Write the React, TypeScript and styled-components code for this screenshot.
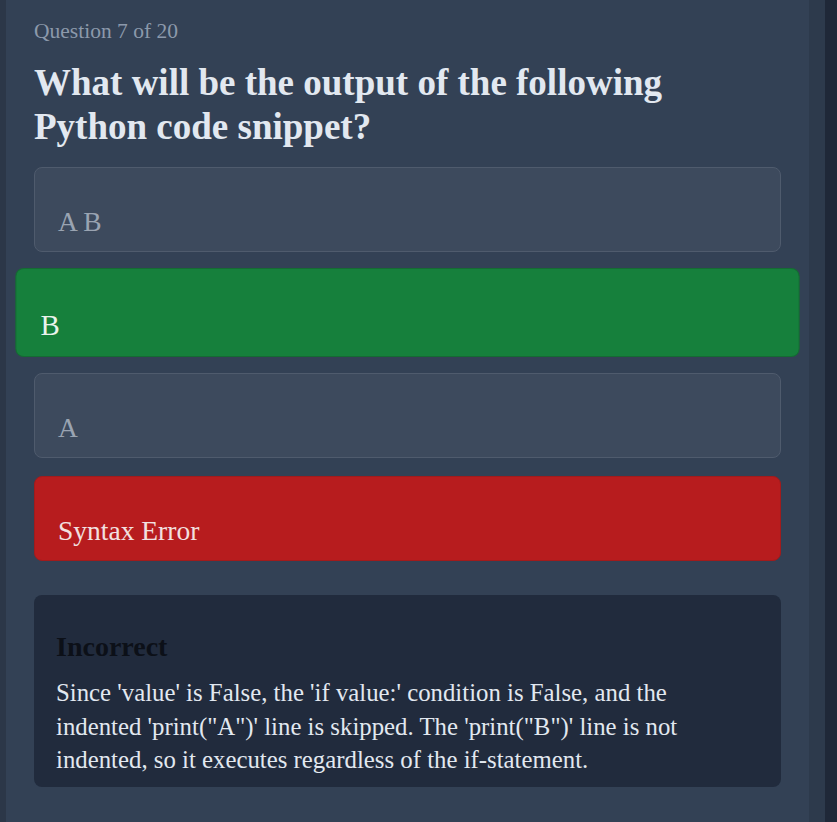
import React from 'react';
import styled, { createGlobalStyle } from 'styled-components';

type OptionState = 'idle' | 'correct' | 'wrong';

const options: { label: string; state: OptionState }[] = [
  { label: 'A B', state: 'idle' },
  { label: 'B', state: 'correct' },
  { label: 'A', state: 'idle' },
  { label: 'Syntax Error', state: 'wrong' },
];

const GlobalStyle = createGlobalStyle`
  html, body {
    margin: 0;
    padding: 0;
    background: #2c3748;
    font-family: "Liberation Serif", "Times New Roman", serif;
  }
`;

const Shell = styled.div`
  display: flex;
  width: 100%;
  height: 822px;
  overflow: hidden;
`;

const LeftEdge = styled.div`
  width: 6px;
  flex-shrink: 0;
  background: #2c3748;
`;

const Panel = styled.main`
  flex: 1;
  background: #334155;
  padding: 15px 28px 0;
  box-sizing: border-box;
`;

const Gutter = styled.div`
  width: 16px;
  flex-shrink: 0;
  background: #2d3a4c;
`;

const ScrollTrack = styled.div`
  width: 12px;
  flex-shrink: 0;
  background: #1f2838;
`;

const Counter = styled.div`
  font-size: 21.5px;
  line-height: 32px;
  color: #8c99ab;
`;

const Title = styled.h1`
  margin: 14px 0 19px;
  max-width: 680px;
  font-size: 37px;
  line-height: 43.5px;
  font-weight: 700;
  color: #e2e8f0;
`;

const OptionList = styled.div`
  display: flex;
  flex-direction: column;
  gap: 18px;
`;

const palette: Record<OptionState, { bg: string; border: string; text: string }> = {
  idle: { bg: '#3d4a5d', border: '#4f5b6d', text: '#9aa4b2' },
  correct: { bg: '#16803c', border: '#156b33', text: '#eaf3ec' },
  wrong: { bg: '#b71c1e', border: '#a11b1c', text: '#f2e0e0' },
};

const Option = styled.button<{ $state: OptionState }>`
  display: flex;
  align-items: flex-start;
  width: 100%;
  height: 85px;
  box-sizing: border-box;
  padding: 37px 23px 12px;
  border-radius: 8px;
  border: 1px solid ${p => palette[p.$state].border};
  background: ${p => palette[p.$state].bg};
  color: ${p => palette[p.$state].text};
  font-family: inherit;
  font-size: 27.5px;
  line-height: 33px;
  text-align: left;
  cursor: pointer;
  transform: ${p => (p.$state === 'correct' ? 'scale(1.05)' : 'none')};
`;

const Feedback = styled.section`
  margin-top: 34px;
  height: 192px;
  box-sizing: border-box;
  padding: 35px 22px 12px;
  border-radius: 8px;
  background: #212b3d;
`;

const FeedbackTitle = styled.h3`
  margin: 0 0 12px;
  font-size: 28px;
  line-height: 34px;
  font-weight: 700;
  color: #0c1018;
`;

const Explanation = styled.p`
  margin: 0;
  max-width: 665px;
  font-size: 24.8px;
  line-height: 33.5px;
  color: #e2e8f0;
`;

export default function App() {
  return (
    <>
      <GlobalStyle />
      <Shell>
        <LeftEdge />
        <Panel>
          <Counter>Question 7 of 20</Counter>
          <Title>What will be the output of the following Python code snippet?</Title>
          <OptionList>
            {options.map(o => (
              <Option key={o.label} $state={o.state}>
                {o.label}
              </Option>
            ))}
          </OptionList>
          <Feedback>
            <FeedbackTitle>Incorrect</FeedbackTitle>
            <Explanation>
              Since 'value' is False, the 'if value:' condition is False, and the indented
              'print("A")' line is skipped. The 'print("B")' line is not indented, so it
              executes regardless of the if-statement.
            </Explanation>
          </Feedback>
        </Panel>
        <Gutter />
        <ScrollTrack />
      </Shell>
    </>
  );
}
